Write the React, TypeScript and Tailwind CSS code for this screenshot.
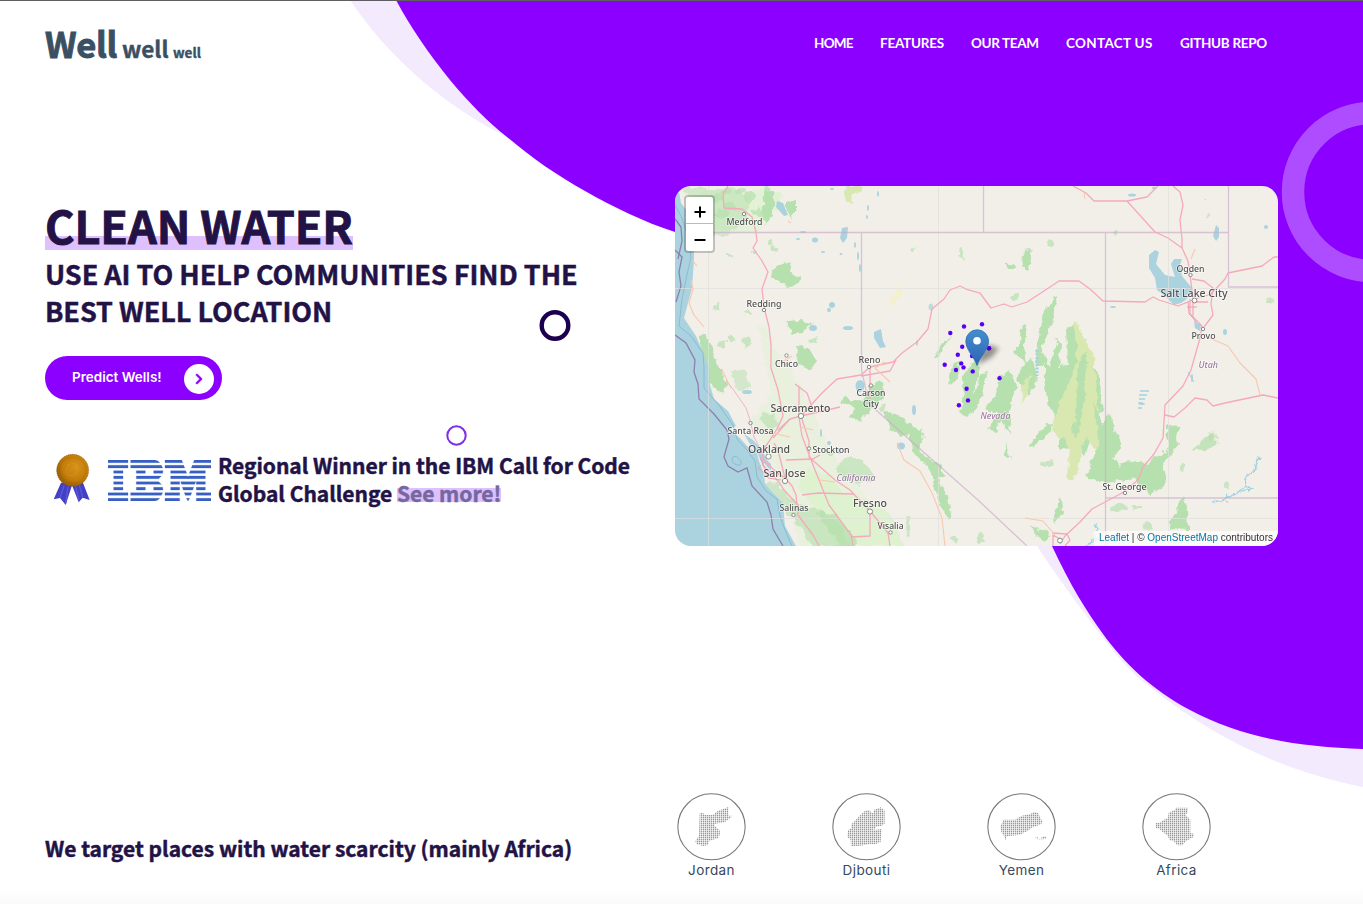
import React from "react";
import { FaChevronRight } from "react-icons/fa";

const heading = "font-['Noto_Sans_CJK_SC','Noto_Sans',sans-serif] font-bold text-[#221246] [-webkit-text-stroke:0.45px_currentColor]";
const ui = "font-[Inter,'Open_Sans',sans-serif]";

const navItems = [
  { label: "HOME", width: "w-[39px] tracking-[-0.75px]" },
  { label: "FEATURES", width: "w-[64px] tracking-[-0.25px]" },
  { label: "OUR TEAM", width: "w-[68px] tracking-[-0.35px]" },
  { label: "CONTACT US", width: "w-[87px] tracking-[0.3px]" },
  { label: "GITHUB REPO", width: "w-[87px] tracking-[-0.3px]" },
];

const countries = [
  {
    name: "Jordan",
    d: "M68 61L77 59L84 66H107L122 54L138 48L154 42V68H163V73L143 88L115 92L112 98L128 112L129 124L123 136L97 143L93 156L78 159L58 153L55 144L66 128L67 90Z",
  },
  {
    name: "Djbouti",
    d: "M48 112L58 105L57 95L74 78L85 66L97 55L109 51L122 61L127 50L147 43L158 53L158 92L149 98L131 102L130 108L118 112L150 108L147 126L146 147L132 153H114L85 158L57 160L56 140L46 132Z",
  },
  {
    name: "Yemen",
    d: "M49 80H85L102 69L129 63L143 56L154 61L161 77L166 84L163 94L134 104L122 114L98 125L59 130L56 142L51 128L43 118L40 101Z M144 133H151L157 138L163 134L171 129L181 135L169 139H153Z",
  },
  {
    name: "Africa",
    d: "M78 74L80 59L99 50V44H138V57L131 66L140 75L145 80V120L157 123L154 132L132 145L121 157H105L96 145L83 142L77 128L59 115L53 108L41 104V90H51L64 82Z",
  },
];

const wells = [
  [964, 326.5], [950.3, 333], [982, 324.3], [962.2, 346.7], [957.8, 354.8], [944.7, 364.7],
  [961.2, 363.4], [963.5, 367.4], [956, 370], [972.7, 371.4], [966.6, 388.8], [968, 400.4],
  [958.9, 405.3], [989, 348.2], [999.5, 378.3], [972, 356],
];

type City = [string, number, number, number, number, boolean?];
const cities: City[] = [
  ["Medford", 726.5, 225, 36, 9.5], ["Redding", 746.5, 306.5, 35, 9.5],
  ["Chico", 775, 366.5, 23, 9.5], ["Reno", 858.5, 363, 22, 9.5],
  ["Carson", 856.5, 396, 29, 9], ["City", 863, 407, 16, 9],
  ["Sacramento", 770.5, 412, 60, 11], ["Santa Rosa", 727.5, 434, 46, 9],
  ["Oakland", 748, 452.5, 42, 11], ["Stockton", 812.5, 452.5, 37, 9],
  ["San Jose", 763.5, 476.5, 42, 11], ["Salinas", 779.5, 511, 29, 9],
  ["Fresno", 853, 507, 34, 11], ["Visalia", 877.5, 529, 26, 9],
  ["Ogden", 1176.5, 271.5, 28, 9.5], ["Salt Lake City", 1160.5, 297, 67, 11],
  ["Provo", 1191.5, 339, 24, 9.5], ["St. George", 1102.5, 489.5, 44, 9.5],
  ["California", 836.5, 481, 39, 9.2, true], ["Nevada", 980.5, 419, 30, 9.2, true],
  ["Utah", 1198.5, 368.3, 19.5, 9.2, true],
];

const stops = [
  [744, 214], [764, 310], [786.5, 355.5], [869, 367], [871, 385.5], [801, 416, 2.6], [750.5, 423],
  [768.5, 456.5, 2.6], [809, 448.5], [785, 481, 2.6], [793.5, 515], [870, 511.5, 2.6], [890.5, 532.5],
  [1190.5, 275], [1194.5, 300.5, 2.4], [1203, 329], [1125, 493], [1060, 540.5, 2.4],
];

/* Small patches of woodland and lakes scattered over the basin. */
const speckles: [number, number, number, number][] = [
  [717, 198, 7, 3], [731, 207, 8, 4], [726, 193, 6, 3], [750, 196, 6, 5], [768, 194, 4, 8],
  [758, 212, 7, 4], [740, 190, 6, 3], [765, 216, 4, 6], [722, 214, 8, 4], [770, 243, 3, 3],
  [774, 249, 4, 3], [729, 255, 3, 1.5], [754, 253, 3, 2], [749, 312, 3, 2], [717, 307, 2, 5],
  [731, 338, 5, 4], [747, 341, 5, 6], [813, 340, 5, 2], [722, 344, 4, 4], [961, 254, 2, 6],
  [914, 250, 2, 2], [1050, 242, 3, 4], [1115, 233, 2, 2], [1208, 216, 2, 3], [1270, 301, 4, 2.5],
  [1205, 201, 1.5, 2], [1015, 297, 3, 3], [1047, 464, 7, 3], [1211, 437, 3, 4], [1182, 468, 3, 5],
  [1137, 507, 5, 2], [1119, 508, 8, 3], [1148, 526, 4, 4], [981, 538, 3, 6], [954, 540, 3, 2],
  [908, 526, 2, 10], [882, 408, 3, 3], [830, 452, 5, 2], [1226, 485, 2, 3],
];
const ponds: [number, number, number, number][] = [
  [832, 189, 2, 1], [878, 194, 1, 3], [868, 208, 1, 3], [867, 217, 1, 2], [803, 232, 3, 1],
  [815, 240, 3, 2.5], [798, 239, 2, 1], [855, 245, 1, 3], [858, 256, 1, 4], [860, 268, 1, 4],
  [841, 254, 1.5, 1], [823, 252, 2, 1], [848, 328, 5, 2], [832, 305, 3, 3], [829, 310, 2, 2],
  [813, 328, 4, 3], [917, 343, 1, 3], [747, 392, 5, 2], [1132, 195, 4, 1.5], [1154, 188, 2, 1.5],
  [1266, 227, 2, 2], [1225, 332, 2, 3], [1113, 307, 3, 1], [1192, 378, 1, 4], [914, 410, 2, 5],
  [901, 446, 4, 3.5], [829, 443, 2, 2], [839, 451, 2, 3], [1142, 404, 3, 1], [821, 433, 1, 4],
];

function TerrainMap() {
  return (
    <svg viewBox="675 186 603 360" className="block h-full w-full font-['Noto_Sans','Open_Sans',sans-serif]">
      <defs>
        <filter id="soft" x="-20%" y="-20%" width="140%" height="140%">
          <feGaussianBlur stdDeviation="2.6" />
        </filter>
        <filter id="ragged" x="-5%" y="-5%" width="110%" height="110%">
          <feTurbulence type="fractalNoise" baseFrequency="0.12" numOctaves="3" seed="4" />
          <feDisplacementMap in="SourceGraphic" scale="8" xChannelSelector="R" yChannelSelector="G" />
        </filter>
        <linearGradient id="pin" x1="0" y1="0" x2="0" y2="1">
          <stop offset="0" stopColor="#438fce" />
          <stop offset="1" stopColor="#2e62b5" />
        </linearGradient>
      </defs>
      <rect x="675" y="186" width="603" height="360" fill="#f2efe9" />

      {/* valley grassland */}
      <g fill="#d3f5c1" opacity=".65" filter="url(#ragged)">
        <path d="M758 325L767 326L775 352L795 375L810 405L820 430L838 462L865 495L885 515L892 546H800L790 505L778 475L762 440L752 420L770 395L765 360Z" opacity=".45" />
        <path d="M806 470L830 476L842 492L870 500L890 515L904 546H835L820 515L798 488Z" />
        <path d="M775 192L781 192L779 210L774 208Z" />
        <path d="M690 200L706 190L745 192L770 187L776 205L755 233L718 232L709 215Z" opacity=".7" />
      </g>

      {/* woodland */}
      <g fill="#b6e0ae" filter="url(#ragged)">
        <path d="M680 188L738 188L751 201L744 221L728 236L714 236L708 211Z" opacity=".5" />
        <path d="M765 191L774 190L773 214L764 225L763 203Z" />
        <path d="M786 202L793 201L797 210L790 218Z" />
        <path d="M772 272L783 260L791 263L789 271L800 277L798 285L786 286L778 279L771 279Z" />
        <path d="M786 320L801 319L812 324L803 333L793 334L787 328Z" />
        <path d="M797 347L809 348L816 360L810 370L799 365Z" />
        <path d="M699 336L706 335L714 356L727 385L723 394L708 382L705 363Z" />
        <path d="M729 370L744 369L752 388L739 391Z" opacity=".5" />
        <path d="M762 412L774 414L778 425L770 431L760 422Z" opacity=".6" />
        <path d="M767 482L780 483L788 497L800 505L820 510L840 525L851 546H812L794 520L775 500L764 491Z" opacity=".6" />
        <path d="M816 512L835 514L855 538L857 546H841Z" opacity=".8" />
        <path d="M870 385L883 382L885 398L876 402L862 420L849 417L856 406L840 404L842 399L864 402Z" />
        <path d="M884 412L895 413L912 426L907 438L890 431Z" />
        <path d="M908 426L922 430L924 439L918 447L928 459L942 466L945 477L934 480L926 464L912 450Z" />
        <path d="M936 477L944 490L949 505L953 518L948 521L938 500L933 482Z" />
        <path d="M834 468L850 455L866 464L874 477L861 485L846 481Z" opacity=".65" />
        <path d="M933 357L946 339L950 337L943 350L936 357Z" />
        <path d="M951 366L958 361L959 378L952 386L948 382Z" />
        <path d="M966 370L978 358L980 373L973 390L976 408L967 417L959 412L964 397L961 380Z" />
        <path d="M981 375L987 370L982 394L974 413L972 398Z" />
        <path d="M1000 375L1009 370L1016 384L1009 411L1011 432L1004 429L1000 421L996 432L988 430L997 413L986 408L996 395Z" />
        <path d="M1020 370L1032 357L1037 377L1029 396L1018 383Z" />
        <path d="M1023 325L1027 324L1024 351L1026 364L1014 352L1019 343Z" />
        <path d="M1053 299L1057 297L1051 325L1041 346L1046 363L1036 368L1037 347L1043 317Z" />
        <path d="M1046 361L1050 367L1058 338L1061 345L1059 367L1068 364L1066 330L1074 322L1083 337L1090 358L1099 378L1103 406L1096 426L1085 455L1078 448L1060 449L1060 426L1049 406L1046 385Z" />
        <path d="M1108 412L1121 445L1112 459L1120 466L1136 460L1147 463L1167 449L1167 425L1180 426L1176 447L1163 465L1167 481L1151 496L1134 479L1106 483L1087 476L1094 455Z" />
        <path d="M1054 421L1050 432L1030 449L1035 435Z" />
        <path d="M1009 442L1007 452L1012 460L1002 453Z" />
        <path d="M1061 495L1062 513L1055 524L1054 516Z" />
        <path d="M1183 495L1187 510L1188 530L1170 529L1174 513Z" />
        <path d="M1028 526L1050 534L1045 541Z" />
        <path d="M1025 249L1032 248L1029 269L1024 270L1022 260Z" />
        <path d="M1004 263L1015 265L1016 269L1008 269Z" />
        <path d="M1192 451L1204 439L1215 432L1217 445L1208 449Z" opacity=".8" />
        {speckles.map(([x, y, rx, ry], i) => (
          <ellipse key={i} cx={x} cy={y} rx={rx} ry={ry} opacity=".7" />
        ))}
      </g>
      <g fill="#d9e8b0" filter="url(#ragged)">
        <path d="M1073 321L1080 327L1084 340L1094 356L1095 380L1100 425L1097 450L1085 437L1080 460L1073 483L1067 479L1069 445L1052 430L1060 400L1074 370L1078 350Z" />
        <path d="M845 186H864V191L854 192L851 204L845 200Z" />
        <path d="M1032 374L1028 389L1023 405L1021 387Z" />
      </g>
      <g fill="#b6e0ae" filter="url(#ragged)">
        <path d="M1079 361L1087 352L1086 383L1080 430L1073 437L1077 396Z" />
        <path d="M1094 402L1106 431L1098 440Z" />
      </g>
      <path d="M900 285L903 294L892 303L887 306L894 294Z" fill="#f4f0cb" filter="url(#ragged)" />

      {/* ocean and lakes */}
      <g fill="#aad3df">
        <path d="M675 186H678L681 203L687 211L694 242L694 260L692 288L684 318L696 336L702 350L710 371L710 385L714 399L728 411L736 426L729 430L740 438L747 446L757 453L759 461L764 474L765 484L774 494L783 503L784 516L785 526L796 546H675Z" />
        <path d="M744 434L753 440L762 450L766 458L763 466L758 454L750 444Z M765 458L771 464L771 471L764 463Z" />
        <path d="M1149 255L1155 250L1159 252L1156 264L1165 275L1175 277L1171 264L1174 259L1182 259L1180 265L1182 276L1192 288L1190 296L1184 301L1181 303L1174 305L1165 296L1157 290L1155 278L1149 268Z" />
        <path d="M1194 321L1201 325L1200 331L1195 328Z M1216 225L1219 228L1219 237L1216 241L1213 236Z" />
        <path d="M842 228L848 227L847 238L843 243L840 238Z M874 332L881 329L883 341L886 347L880 348L874 338Z" />
        <path d="M777 201L783 203L788 215L784 216L776 207Z" />
        <ellipse cx="860" cy="386" rx="4.5" ry="6" />
        <ellipse cx="931" cy="307" rx="2.5" ry="3.5" fill="#c1dce1" />
        {ponds.map(([x, y, rx, ry], i) => (
          <ellipse key={i} cx={x} cy={y} rx={rx} ry={ry} />
        ))}
      </g>
      <g fill="none" stroke="#a5d2e0" strokeWidth="1.5" filter="url(#ragged)">
        <path d="M1259 457L1255 469L1246 477L1243 488L1232 495L1222 500L1213 502M1244 485L1252 490L1240 491M1226 494L1228 503" />
        <path d="M1096 524L1095 538L1085 547L1074 549M1099 538L1091 544" />
      </g>
      <g fill="none" stroke="#a5d2e0" strokeWidth="1.5">
        <path d="M1140 391H1149M1139 395H1147M1139 399H1145M1138 403H1143M1138 408H1142" />
        <path d="M1037 350V376" strokeDasharray="2 1.5" strokeWidth="3" />
        <path d="M1188 372L1194 382" strokeWidth="1" />
      </g>

      {/* maritime limits and coastline */}
      <g fill="none">
        <path d="M675 250L682 257L679 272L681 286L676 302M675 335L686 343L695 360L694 372L698 384L699 399L714 414L727 430L729 439L724 457L728 466L738 472L747 468L752 486L767 502L771 515L773 529L783 546" stroke="#8e7fae" strokeWidth="1.3" />
        <path d="M675 205L681 216L688 236L691 257L688 270L682 299L679 326L691 336L703 353L704 367L704 388L718 404L733 425L737 439L747 450L755 461L757 477L766 491L777 499L780 516L785 530L792 546" stroke="#83b4d0" strokeWidth=".8" />
        <path d="M675 219L681 227L682 241L678 259" stroke="#8e7fae" strokeWidth="1.3" />
        <path d="M733 457C730 461 735 466 740 465C744 462 736 454 733 457Z" stroke="#83b4d0" strokeWidth=".8" />
      </g>

      {/* tile seams */}
      <path d="M708.5 186V546M938.5 186V546M1168.5 186V546M675 288.5H1278M675 518.5H1278" stroke="#dfdfdc" strokeWidth=".7" />

      {/* state borders */}
      <path d="M710 232.5H1228M861.5 232.5V370L869 404L978 500L1027 546M983.5 186V232.5M1105.5 232.5V546M1228.5 186V287H1278M1105.5 498H1278" fill="none" stroke="#c9a9c7" strokeOpacity=".65" strokeWidth="1.3" />

      {/* motorways */}
      <g fill="none" stroke="#f6a9bb" strokeWidth="1.3" strokeLinejoin="round">
        <path d="M728 186L723 194L724 208L742 209L752 217L756 232L757 241L753 248L762 261L768 272L762 289L764 307L769 327L771 345L771 368L778 390L783 416L777 429L768 443L763 450L763 465L779 482L784 490L798 505L798 515L813 535L819 546" />
        <path d="M785 478L792 486L796 495L797 505M778 430L790 419L801 416L822 393L837 379L861 375L870 367L893 362L902 353L917 342L928 329L932 309L944 299L950 290L960 286L966 289L980 293L991 308L1004 304L1012 307L1027 302L1047 289L1059 281L1079 281L1090 289L1103 301L1145 302L1153 297L1159 300L1178 306L1195 299L1211 294L1225 279L1228 273L1262 266L1274 257L1278 257" />
        <path d="M773 438L790 419M799 417L802 436L813 465L829 505L851 535L853 546M801 416L809 441L809 457L835 480L850 490L870 511L888 533L890 546M799 386V416M795 384L807 393L812 407M786 460L813 459L820 455M801 416L840 407M870 367V399M861 376L890 371L896 360M802 495L818 493L853 494M870 511V536L851 537M774 443L778 450L785 478L774 470L764 460" />
        <path d="M726 380L735 392L746 408L750 420L754 437L762 452" strokeWidth=".9" />
        <path d="M1073 186L1086 193L1094 201L1127 201L1147 197L1158 186M1127 201L1155 232L1168 238L1182 248L1188 261L1190 275L1193 298L1193 317L1202 326L1200 338L1191 370L1183 386L1165 405L1163 438L1154 454L1143 467L1138 480L1122 493L1092 509L1080 522L1065 536L1060 544M1173 186L1180 192L1183 205L1180 220L1182 239L1182 248M1165 415L1174 417L1185 408L1195 398L1207 400L1213 406L1225 403L1263 395L1278 398M1192 279L1204 281L1213 288L1211 304L1213 315L1204 327M1190 299V313L1196 322M1193 302L1208 302" />
        <path d="M1052 533L1067 534L1070 540L1065 546M1053 546V535L1060 539" />
      </g>
      <g fill="none" stroke="#f8c8ae" strokeWidth="1.1" strokeLinejoin="round">
        <path d="M897 443L904 460L920 471L932 493L942 518L945 546M1205 336L1228 346L1240 363L1256 379L1260 395M1025 518L1043 521L1055 535M692 260L697 266M691 280L693 289L689 303L694 315L704 327M722 370L731 388M763 431L790 437M1195 249L1191 259M1084 193L1085 199M788 221L791 223M782 362L792 356M813 430L800 427M820 480L835 482M885 362L875 368L890 382" />
      </g>
      <g fill="none" stroke="#ee9aa8" strokeWidth=".9">
        <path d="M760 457L768 478L781 480M761 465L758 468L766 474M778 474L788 480M1188 302L1189 314L1194 319M1187 307H1197" />
      </g>

      {stops.map(([x, y, r], i) => (
        <circle key={i} cx={x} cy={y} r={r ?? 1.7} fill="#fff" stroke="#888" strokeWidth="1" />
      ))}
      {cities.map(([name, x, y, w, size, state]) => (
        <text
          key={name}
          x={x}
          y={y}
          textLength={w}
          lengthAdjust="spacingAndGlyphs"
          fontSize={size}
          fontStyle={state ? "italic" : "normal"}
          fontWeight={state ? 500 : 500}
          fill={state ? "#a07ba3" : "#505050"}
          stroke="#ffffff"
          strokeOpacity=".6"
          strokeWidth="1.6"
          paintOrder="stroke"
        >
          {name}
        </text>
      ))}

      {wells.map(([x, y], i) => (
        <circle key={i} cx={x} cy={y} r="2.2" fill="#5a00fa" />
      ))}
      <path d="M977 365L981 352L989 345L999 348L992 357Z" fill="#000" opacity=".4" filter="url(#soft)" />
      <circle cx="989" cy="348.2" r="2.2" fill="#4a00d0" />
      <path d="M977 365.5C974.5 357 965.8 350 965.8 341.2A11.4 11.4 0 0 1 988.6 341.2C988.6 350 979.5 357 977 365.5Z" fill="url(#pin)" stroke="#2f6eaa" strokeWidth=".8" />
      <circle cx="977" cy="340.8" r="3.8" fill="#fff" />
    </svg>
  );
}

function Medal() {
  return (
    <svg viewBox="20 20 120 165" className="mt-[3px] h-[55px] w-[40px]">
      <defs>
        <radialGradient id="gold" cx=".6" cy=".4" r=".65">
          <stop offset="0" stopColor="#d7931c" />
          <stop offset=".65" stopColor="#c27b08" />
          <stop offset="1" stopColor="#8f5905" />
        </radialGradient>
      </defs>
      <path d="M47 112L25 162L44 158L61 179L80 120L100 171L112 157L133 164L112 110Z" fill="#4340c6" />
      <path d="M56 121L44 157M68 124L61 174M91 124L101 166M102 120L112 156" stroke="#5a59d6" strokeWidth="4" fill="none" />
      <circle cx="82" cy="75" r="48" fill="url(#gold)" stroke="#8f5905" strokeWidth="2" strokeDasharray="3 3" />
      <circle cx="82" cy="75" r="39" fill="none" stroke="#9b6208" strokeWidth="1.5" opacity=".6" />
      <path d="M68 58L88 54L99 70L90 90L69 91L61 77Z" fill="none" stroke="#dda239" strokeWidth="2" opacity=".5" />
    </svg>
  );
}

function IbmLogo() {
  return (
    <svg viewBox="189 45 309 123" className="h-[41px] w-[103px]">
      <path
        fill="#3860c4"
        stroke="#3860c4"
        strokeWidth=".8"
        d="M189 45h60v8h-60zM189 61h60v8h-60zM206 77h28v8h-28zM206 93h28v8h-28zM206 110h28v8h-28zM206 127h28v8h-28zM189 143h60v8h-60zM189 160h60v8h-60z
        M257 45h73q10 2 14 8h-87zM257 61h92l4 8h-96zM274 77h27v8h-27zM326 77h28l-1 8h-27zM274 93h75l-8 8h-67zM274 110h67l8 8h-75zM274 127h27v8h-27zM326 127h27l1 8h-28zM257 143h96l-4 8h-92zM257 160h87q-4 6-14 8h-73z
        M360 45h50l3 8h-53zM448 45h50v8h-53zM360 61h56l3 8h-59zM442 61h56v8h-59zM377 77h45l3 8h-48zM436 77h45v8h-48zM377 93h51l2 8h-53zM430 93h51v8h-53zM377 110h27v8h-27zM407 110h45l-3 8h-39zM454 110h27v8h-27zM377 127h27v8h-27zM412 127h34l-3 8h-28zM454 127h27v8h-27zM360 143h44v8h-44zM418 143h22l-3 8h-16zM454 143h44v8h-44zM360 160h44v8h-44zM424 160h10l-5 8zM454 160h44v8h-44z"
      />
    </svg>
  );
}

function Backdrop() {
  return (
    <svg viewBox="0 0 1363 904" className="pointer-events-none absolute inset-0 h-[904px] w-[1363px]">
      <path d="M350 0C386 54 440 103 505 136L800 250L1037 546C1056 575 1078 605 1100 634C1120 660 1133 674 1150 687C1214 738 1282 771 1363 787V0Z" fill="#f3eafe" />
      <path d="M396 0C411 28 429 54 450 80C470 104 487 121 507 137C532 158 556 175 585 191C613 207 644 222 675 232L950 360L1052 546C1070 585 1087 612 1103 634C1124 663 1152 690 1190 710C1242 738 1300 747 1363 749V0Z" fill="#8c00ff" />
      <circle cx="1372" cy="192" r="79" fill="none" stroke="#ae4dff" strokeWidth="22.5" />
      <circle cx="555" cy="325.5" r="13.3" fill="none" stroke="#1c004f" strokeWidth="4.4" />
      <circle cx="456.5" cy="435.5" r="9.2" fill="none" stroke="#7c2ee8" strokeWidth="2" />
    </svg>
  );
}

export default function App() {
  return (
    <div className="relative h-[904px] w-[1363px] overflow-hidden bg-white">
      <Backdrop />
      <div className="relative flex h-full flex-col border-t border-[#5f5f63]">
        <header className="flex h-[85px] items-center justify-between pr-24 pl-[45px]">
          <div className="mt-[7px] flex items-baseline gap-[5px] font-['Noto_Sans_CJK_SC',sans-serif] font-bold leading-10 text-[#3b4f63] [-webkit-text-stroke:0.4px_currentColor]">
            <span className="w-[72px] whitespace-nowrap text-[34.5px] tracking-[-0.3px] [-webkit-text-stroke:0.9px_currentColor]">Well</span>
            <span className="w-[46px] whitespace-nowrap text-[22.5px]">well</span>
            <span className="whitespace-nowrap text-[13.5px]">well</span>
          </div>
          <nav className="flex gap-[27px] font-[Lato,sans-serif] text-[13.5px] font-bold text-white">
            {navItems.map((n) => (
              <a key={n.label} className={`${n.width} whitespace-nowrap`}>{n.label}</a>
            ))}
          </nav>
        </header>

        <main className="flex h-[460px] pt-[100px] pl-[45px]">
          <section className="w-[630px]">
            <h1 className={`${heading} mt-[16px] h-[50px] text-[45px] leading-[46px]`}>
              <span className="inline-block h-[48px] bg-[linear-gradient(transparent_34px,#dfc0ff_34px)] tracking-[-0.1px] [-webkit-text-stroke:0.9px_currentColor]">CLEAN WATER</span>
            </h1>
            <h2 className={`${heading} mt-[3px] text-[27px] leading-[37px] tracking-[-0.04px]`}>
              USE AI TO HELP COMMUNITIES FIND THE
              <br />
              BEST WELL LOCATION
            </h2>
            <button className={`${ui} mt-[27px] flex h-[44px] w-[177px] items-center justify-between rounded-full bg-[#8c00ff] pr-2 pl-[27px] text-[13.5px] font-semibold text-white`}>
              <span className="mb-[2px] whitespace-nowrap">Predict Wells!</span>
              <span className="mt-[2px] flex size-[30px] items-center justify-center rounded-full bg-white">
                <FaChevronRight className="size-[12px] text-[#8c00ff]" stroke="currentColor" strokeWidth="24" />
              </span>
            </button>
            <div className="mt-[49px] flex items-start pl-[7px]">
              <Medal />
              <div className="mt-[11px] ml-[16px]"><IbmLogo /></div>
              <p className={`${heading} ml-[7px] mt-[2px] whitespace-nowrap text-[21px] leading-[28px] tracking-[-0.03px]`}>
                Regional Winner in the IBM Call for Code
                <br />
                Global Challenge{" "}
                <a className="bg-[linear-gradient(transparent_10px,#dfc0ff_10px,#dfc0ff_24px,transparent_24px)] text-[#7468a0]">See more!</a>
              </p>
            </div>
          </section>

          <section className="relative h-[360px] w-[603px] overflow-hidden rounded-[16px]">
            <TerrainMap />
            <div className="absolute top-[9px] left-[9px] flex h-[58px] w-[31px] flex-col rounded-[4px] border-2 border-black/20 bg-white bg-clip-padding text-black">
              <button className="flex h-[27px] items-center justify-center border-b border-[#bbb]">
                <svg viewBox="0 0 12 12" className="mt-1 size-[12px]" stroke="#000" strokeWidth="2"><path d="M6 .5V11.5M.5 6H11.5" /></svg>
              </button>
              <button className="flex h-[27px] items-center justify-center">
                <svg viewBox="0 0 12 12" className="mt-1 size-[12px]" stroke="#000" strokeWidth="2"><path d="M.5 6H11.5" /></svg>
              </button>
            </div>
            <div className="absolute right-0 bottom-0 h-[15px] w-[184px] bg-white/70 pl-[5px] font-['Liberation_Sans',sans-serif] text-[10px] leading-[14px] whitespace-nowrap text-[#333]">
              <a className="text-[#0078a8]">Leaflet</a> | © <a className="text-[#0078a8]">OpenStreetMap</a> contributors
            </div>
          </section>
        </main>

        <section className="mt-[247px] flex pl-[45px]">
          <h3 className={`${heading} mt-[41px] w-[632px] whitespace-nowrap text-[21px] leading-[28px]`}>
            We target places with water scarcity (mainly Africa)
          </h3>
          <div className="-mt-[0.5px] flex gap-[86px]">
            {countries.map((c) => (
              <figure key={c.name} className="flex w-[69px] flex-col items-center">
                <svg viewBox="0 0 207 204" className="h-[68px] w-[69px]">
                  <defs>
                    <pattern id={`dots-${c.name}`} width="6" height="6" patternUnits="userSpaceOnUse">
                      <rect width="4.2" height="4.2" rx="1.2" fill="#8f8f8f" />
                    </pattern>
                  </defs>
                  <ellipse cx="103.5" cy="101.5" rx="101" ry="99" fill="#fff" stroke="#777" strokeWidth="3.2" />
                  <path d={c.d} fill={`url(#dots-${c.name})`} />
                </svg>
                <figcaption className={`${ui} mt-[0.5px] text-[13.5px] leading-[18px] tracking-[0.4px] text-[#34495e]`}>{c.name}</figcaption>
              </figure>
            ))}
          </div>
        </section>
        <div className="mt-auto h-[16px] bg-gradient-to-b from-white to-[#fafafa]" />
      </div>
    </div>
  );
}
